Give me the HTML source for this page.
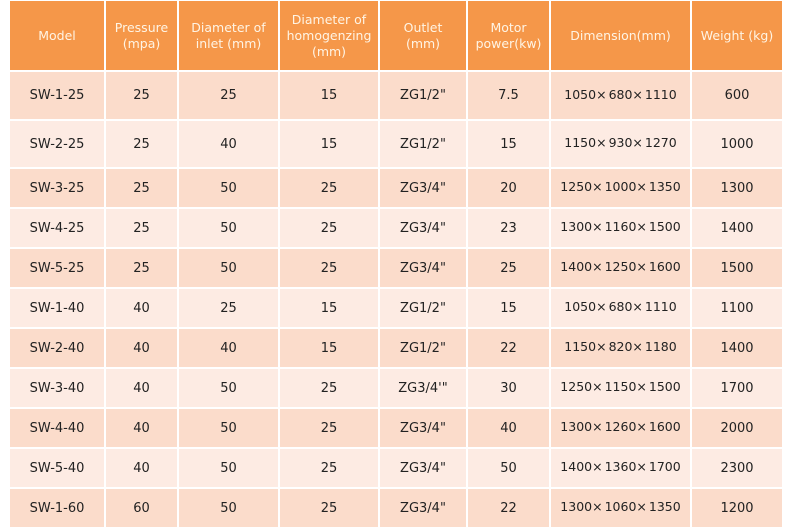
<!DOCTYPE html>
<html><head><style>
body{margin:0;background:#fff;width:792px;height:524px;overflow:hidden;position:relative;font-family:"DejaVu Sans","Liberation Sans",sans-serif;}
table{position:absolute;left:8px;top:-1px;border-collapse:collapse;table-layout:fixed;}
td{border:2px solid #fff;text-align:center;font-size:13px;color:#222;padding:0;}
tr.h td{background:#f59749;color:#fff4e4;font-size:12.5px;line-height:16px;}
tr.o td{background:#fbdccb;}
tr.e td{background:#fdebe3;}
td.d{font-size:12.5px;padding-bottom:3px;}
.x{margin-right:2px;}
</style></head><body>
<table>
<colgroup><col style="width:96px"><col style="width:73px"><col style="width:101px"><col style="width:100px"><col style="width:88px"><col style="width:83px"><col style="width:141px"><col style="width:92px"></colgroup>
<tr class="h" style="height:71px"><td>Model</td><td>Pressure<br>(mpa)</td><td>Diameter of<br>inlet (mm)</td><td>Diameter of<br>homogenzing<br>(mm)</td><td>Outlet<br>(mm)</td><td>Motor<br>power(kw)</td><td>Dimension(mm)</td><td>Weight (kg)</td></tr>
<tr class="o" style="height:49px"><td>SW-1-25</td><td>25</td><td>25</td><td>15</td><td>ZG1/2"</td><td>7.5</td><td class="d">1050<span class="x">×</span>680<span class="x">×</span>1110</td><td>600</td></tr>
<tr class="e" style="height:48px"><td>SW-2-25</td><td>25</td><td>40</td><td>15</td><td>ZG1/2"</td><td>15</td><td class="d">1150<span class="x">×</span>930<span class="x">×</span>1270</td><td>1000</td></tr>
<tr class="o" style="height:40px"><td>SW-3-25</td><td>25</td><td>50</td><td>25</td><td>ZG3/4"</td><td>20</td><td class="d">1250<span class="x">×</span>1000<span class="x">×</span>1350</td><td>1300</td></tr>
<tr class="e" style="height:40px"><td>SW-4-25</td><td>25</td><td>50</td><td>25</td><td>ZG3/4"</td><td>23</td><td class="d">1300<span class="x">×</span>1160<span class="x">×</span>1500</td><td>1400</td></tr>
<tr class="o" style="height:40px"><td>SW-5-25</td><td>25</td><td>50</td><td>25</td><td>ZG3/4"</td><td>25</td><td class="d">1400<span class="x">×</span>1250<span class="x">×</span>1600</td><td>1500</td></tr>
<tr class="e" style="height:40px"><td>SW-1-40</td><td>40</td><td>25</td><td>15</td><td>ZG1/2"</td><td>15</td><td class="d">1050<span class="x">×</span>680<span class="x">×</span>1110</td><td>1100</td></tr>
<tr class="o" style="height:40px"><td>SW-2-40</td><td>40</td><td>40</td><td>15</td><td>ZG1/2"</td><td>22</td><td class="d">1150<span class="x">×</span>820<span class="x">×</span>1180</td><td>1400</td></tr>
<tr class="e" style="height:40px"><td>SW-3-40</td><td>40</td><td>50</td><td>25</td><td>ZG3/4'"</td><td>30</td><td class="d">1250<span class="x">×</span>1150<span class="x">×</span>1500</td><td>1700</td></tr>
<tr class="o" style="height:40px"><td>SW-4-40</td><td>40</td><td>50</td><td>25</td><td>ZG3/4"</td><td>40</td><td class="d">1300<span class="x">×</span>1260<span class="x">×</span>1600</td><td>2000</td></tr>
<tr class="e" style="height:40px"><td>SW-5-40</td><td>40</td><td>50</td><td>25</td><td>ZG3/4"</td><td>50</td><td class="d">1400<span class="x">×</span>1360<span class="x">×</span>1700</td><td>2300</td></tr>
<tr class="o" style="height:40px"><td>SW-1-60</td><td>60</td><td>50</td><td>25</td><td>ZG3/4"</td><td>22</td><td class="d">1300<span class="x">×</span>1060<span class="x">×</span>1350</td><td>1200</td></tr>
</table>
</body></html>
